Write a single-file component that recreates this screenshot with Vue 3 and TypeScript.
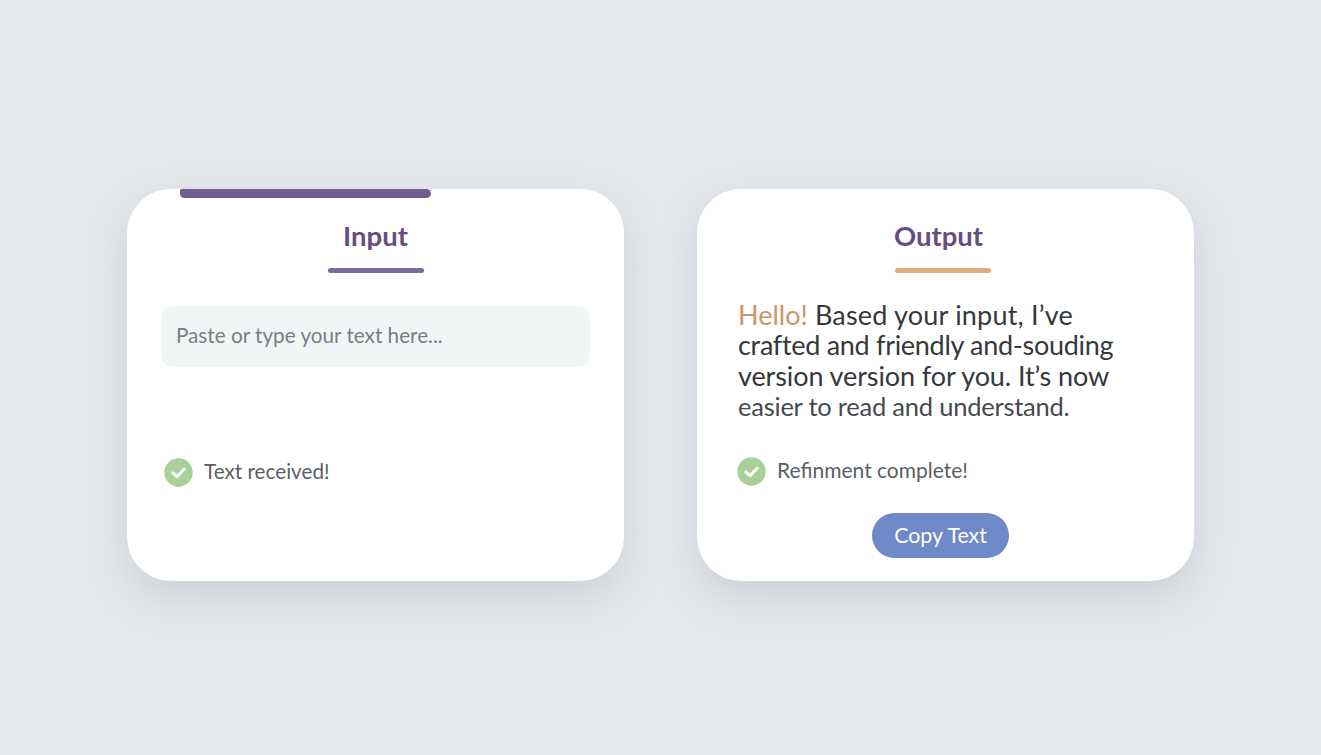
<script setup lang="ts">
const checkPath = "M8.8 14.8l4.2 3.9 7.4-7.7";
</script>

<template>
  <main class="page">
    <section class="card input-card">
      <span class="top-bar"></span>
      <h2 class="title">Input</h2>
      <span class="rule rule-purple"></span>
      <div class="field">Paste or type your text here...</div>
      <div class="status status-input">
        <svg class="check" viewBox="0 0 29 29" aria-hidden="true">
          <circle cx="14.5" cy="14.5" r="14.2" fill="#a8d098" />
          <path :d="checkPath" fill="none" stroke="#fff" stroke-width="3" stroke-linecap="round" stroke-linejoin="round" />
        </svg>
        <span class="status-text">Text received!</span>
      </div>
    </section>

    <section class="card output-card">
      <h2 class="title title-output">Output</h2>
      <span class="rule rule-orange"></span>
      <p class="result">
        <span class="line line-1"><span class="hello">Hello!</span> Based your input, I’ve</span>
        <span class="line line-2">crafted and friendly and-souding</span>
        <span class="line line-3">version version for you. It’s now</span>
        <span class="line line-4">easier to read and understand.</span>
      </p>
      <div class="status status-output">
        <svg class="check" viewBox="0 0 29 29" aria-hidden="true">
          <circle cx="14.5" cy="14.5" r="14.2" fill="#a8d098" />
          <path :d="checkPath" fill="none" stroke="#fff" stroke-width="3" stroke-linecap="round" stroke-linejoin="round" />
        </svg>
        <span class="status-text">Refinment complete!</span>
      </div>
      <button class="copy" type="button">Copy Text</button>
    </section>
  </main>
</template>

<style scoped>
.page {
  box-sizing: border-box;
  width: 1321px;
  height: 755px;
  padding: 189px 127px 0 127px;
  display: flex;
  gap: 73px;
  overflow: hidden;
  background: #e5e8eb;
  font-family: Lato, "Open Sans", sans-serif;
}
.card {
  position: relative;
  box-sizing: border-box;
  width: 497px;
  height: 392px;
  border-radius: 44px;
  background: #ffffff;
  box-shadow: 0 16px 38px rgba(130, 140, 155, 0.24);
  display: flex;
  flex-direction: column;
  align-items: center;
}
.top-bar {
  position: absolute;
  left: 53px;
  top: 0;
  width: 251px;
  height: 9px;
  border-radius: 2px 5px 5px 5px;
  background: #715c8f;
}
.title {
  margin: 28px 0 0;
  height: 38px;
  line-height: 38px;
  font-size: 27.5px;
  font-weight: 700;
  color: #654e7f;
}
.title-output {
  margin-right: 14px;
}
.rule {
  display: block;
  width: 96px;
  height: 5px;
  margin-top: 13px;
  border-radius: 3px;
}
.rule-purple { background: #7a6a9f; }
.rule-orange {
  background: #e2ab7d;
  margin-right: 6px;
}
.field {
  box-sizing: border-box;
  width: 429px;
  height: 61px;
  margin-top: 33px;
  padding-left: 15px;
  border-radius: 12px;
  background: #f2f5f6;
  color: #7a7e82;
  font-size: 20.7px;
  line-height: 59px;
}
.status {
  align-self: flex-start;
  display: flex;
  align-items: center;
  gap: 11px;
  font-size: 21px;
  color: #5b5f63;
}
.status-text {
  padding-bottom: 3px;
}
.check {
  width: 29px;
  height: 29px;
  flex: none;
}
.status-input {
  margin: 91px 0 0 37px;
  font-size: 20.7px;
}
.status-output {
  margin: 35px 0 0 40px;
}
.result {
  align-self: flex-start;
  margin: 27px 0 0 41px;
  font-size: 27px;
  line-height: 30.4px;
  color: #35383c;
  white-space: nowrap;
}
.line { display: block; }
.line-1 { letter-spacing: 0.2px; }
.line-2 { letter-spacing: -0.3px; }
.line-3 { letter-spacing: -0.1px; }
.line-4 {
  color: #46494d;
  font-size: 25.5px;
  letter-spacing: -0.23px;
}
.hello { color: #cf9568; letter-spacing: 0; }
.copy {
  width: 137px;
  height: 45px;
  margin: 27px 10px 0 0;
  padding: 0;
  border: none;
  border-radius: 23px;
  background: #6e8ac8;
  color: #ffffff;
  font-family: inherit;
  font-size: 21.4px;
}
</style>
